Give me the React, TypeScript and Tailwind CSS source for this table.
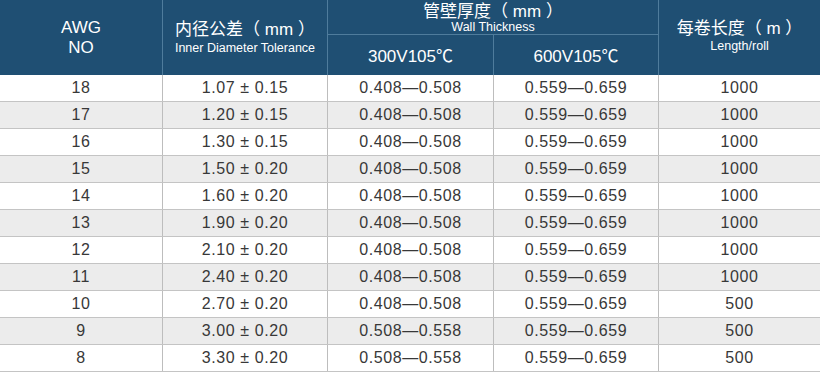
import React from 'react';

// 规格表数据
interface SpecRow {
  awg: string;
  inner: string;
  wall300: string;
  wall600: string;
  length: string;
}

const rows: SpecRow[] = [
  { awg: '18', inner: '1.07 ± 0.15', wall300: '0.408—0.508', wall600: '0.559—0.659', length: '1000' },
  { awg: '17', inner: '1.20 ± 0.15', wall300: '0.408—0.508', wall600: '0.559—0.659', length: '1000' },
  { awg: '16', inner: '1.30 ± 0.15', wall300: '0.408—0.508', wall600: '0.559—0.659', length: '1000' },
  { awg: '15', inner: '1.50 ± 0.20', wall300: '0.408—0.508', wall600: '0.559—0.659', length: '1000' },
  { awg: '14', inner: '1.60 ± 0.20', wall300: '0.408—0.508', wall600: '0.559—0.659', length: '1000' },
  { awg: '13', inner: '1.90 ± 0.20', wall300: '0.408—0.508', wall600: '0.559—0.659', length: '1000' },
  { awg: '12', inner: '2.10 ± 0.20', wall300: '0.408—0.508', wall600: '0.559—0.659', length: '1000' },
  { awg: '11', inner: '2.40 ± 0.20', wall300: '0.408—0.508', wall600: '0.559—0.659', length: '1000' },
  { awg: '10', inner: '2.70 ± 0.20', wall300: '0.408—0.508', wall600: '0.559—0.659', length: '500' },
  { awg: '9', inner: '3.00 ± 0.20', wall300: '0.508—0.558', wall600: '0.559—0.659', length: '500' },
  { awg: '8', inner: '3.30 ± 0.20', wall300: '0.508—0.558', wall600: '0.559—0.659', length: '500' },
];

const font = "font-['Liberation_Sans','Noto_Sans_CJK_SC',sans-serif]";

const App: React.FC = () => {
  return (
    <div className={`w-[820px] h-[373px] bg-white overflow-hidden ${font}`}>
      {/* 表头 */}
      <div className="grid grid-cols-[163px_165px_166px_165px_1fr] grid-rows-[35px_40px] h-[75px] bg-[#1f4f73] text-white">
        <div className="row-span-2 border-r border-[#4f7c9c] flex flex-col items-center justify-center text-[17px] leading-[20px]">
          <span>AWG</span>
          <span>NO</span>
        </div>
        <div className="row-span-2 border-r border-[#4f7c9c] flex flex-col items-center justify-center">
          <span className="text-[17px] leading-[22px]">内径公差（ mm ）</span>
          <span className="text-[12.5px] leading-[15px]">Inner Diameter Tolerance</span>
        </div>
        <div className="col-span-2 border-r border-b border-[#4f7c9c] flex flex-col items-center justify-center pt-0.5">
          <span className="text-[17px] leading-[18px]">管壁厚度（ mm ）</span>
          <span className="text-[12.5px] leading-[13px]">Wall Thickness</span>
        </div>
        <div className="row-span-2 col-start-5 row-start-1 flex flex-col items-center justify-center pb-1">
          <span className="text-[17px] leading-[20px]">每卷长度（ m ）</span>
          <span className="text-[12.5px] leading-[14px]">Length/roll</span>
        </div>
        <div className="border-r border-[#4f7c9c] flex items-center justify-center text-[17px] pt-1">
          300V105℃
        </div>
        <div className="border-r border-[#4f7c9c] flex items-center justify-center text-[17px] pt-1">
          600V105℃
        </div>
      </div>

      {/* 表体 */}
      {rows.map((r, i) => (
        <div
          key={r.awg}
          className={`grid grid-cols-[163px_165px_166px_165px_1fr] h-[27px] border-b border-[#c4c4c4] text-[16px] tracking-[0.6px] text-[#383838] ${
            i % 2 === 1 ? 'bg-[#ececec]' : 'bg-white'
          }`}
        >
          <div className="border-r border-[#bdbdbd] flex items-center justify-center">{r.awg}</div>
          <div className="border-r border-[#bdbdbd] flex items-center justify-center">{r.inner}</div>
          <div className="border-r border-[#bdbdbd] flex items-center justify-center">{r.wall300}</div>
          <div className="border-r border-[#bdbdbd] flex items-center justify-center">{r.wall600}</div>
          <div className="flex items-center justify-center">{r.length}</div>
        </div>
      ))}
    </div>
  );
};

export default App;
